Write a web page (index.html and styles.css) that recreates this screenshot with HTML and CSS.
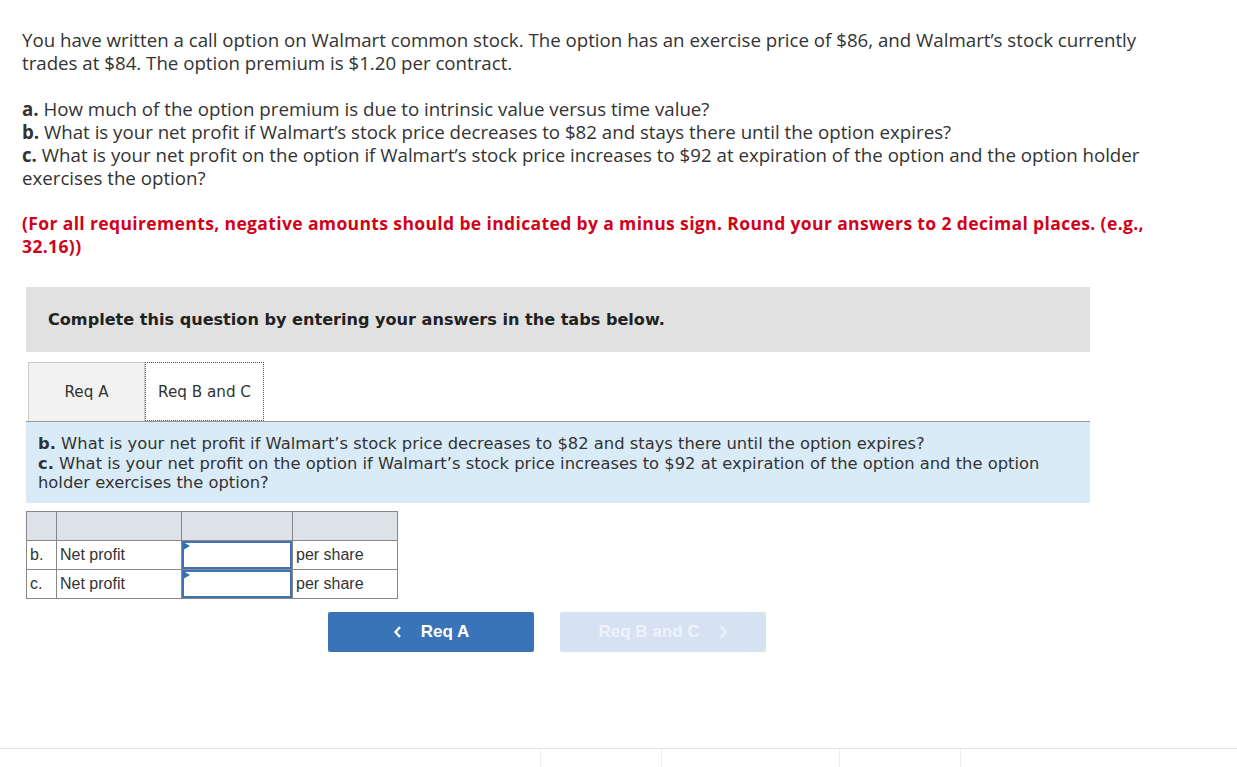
FILE: index.html
```html
<!DOCTYPE html>
<html lang="en">

<head>
    <meta charset="UTF-8">
    <meta name="viewport" content="width=device-width, initial-scale=1.0">
    <title>Question</title>
    <link rel="stylesheet" href="styles.css">
</head>

<body>
    <div class="page">
        <div class="question">
            <p>You have written a call option on Walmart common stock. The option has an exercise price of $86, and Walmart’s stock currently trades at $84. The option premium is $1.20 per contract.</p>
            <p><b>a.</b> How much of the option premium is due to intrinsic value versus time value?<br>
                <b>b.</b> What is your net profit if Walmart’s stock price decreases to $82 and stays there until the option expires?<br>
                <b>c.</b> What is your net profit on the option if Walmart’s stock price increases to $92 at expiration of the option and the option holder exercises the option?</p>
            <p class="note">(For all requirements, negative amounts should be indicated by a minus sign. Round your answers to 2 decimal places. (e.g., 32.16))</p>
        </div>

        <div class="work">
            <div class="banner">Complete this question by entering your answers in the tabs below.</div>

            <div class="tabs">
                <div class="tab">Req A</div>
                <div class="tab active">Req B and C</div>
            </div>

            <div class="panel">
                <b>b.</b> What is your net profit if Walmart’s stock price decreases to $82 and stays there until the option expires?<br>
                <b>c.</b> What is your net profit on the option if Walmart’s stock price increases to $92 at expiration of the option and the option holder exercises the option?
            </div>

            <table class="answers">
                <tr class="head">
                    <td class="c1"></td>
                    <td class="c2"></td>
                    <td class="c3"></td>
                    <td class="c4"></td>
                </tr>
                <tr>
                    <td>b.</td>
                    <td>Net profit</td>
                    <td class="entry"><input type="text"></td>
                    <td>per share</td>
                </tr>
                <tr>
                    <td>c.</td>
                    <td>Net profit</td>
                    <td class="entry"><input type="text"></td>
                    <td>per share</td>
                </tr>
            </table>

            <div class="nav">
                <button class="btn prev">
                    <svg width="10" height="14" viewBox="0 0 10 14"><polyline points="7,2 2.5,7 7,12" fill="none" stroke="currentColor" stroke-width="2.4"/></svg>
                    Req A
                </button>
                <button class="btn next">
                    Req B and C
                    <svg width="10" height="14" viewBox="0 0 10 14"><polyline points="3,2 7.5,7 3,12" fill="none" stroke="currentColor" stroke-width="2.4"/></svg>
                </button>
            </div>
        </div>
    </div>

    <div class="footer">
        <span></span><span></span><span></span><span></span>
    </div>
</body>

</html>
```

FILE: styles.css
```css
body {
    margin: 0;
    background: #fff;
    color: #333;
}

.page {
    padding: 28px 0 0 22px;
    height: 720px;
    box-sizing: border-box;
}

.question {
    font-family: "Open Sans", sans-serif;
    font-size: 18.7px;
    line-height: 23px;
    width: 1125px;
    color: #333;
}

.question p {
    margin: 0 0 23px;
}

.question b {
    font-weight: 700;
}

.note {
    color: #d0021b;
    font-weight: 700;
    font-size: 17.5px;
    letter-spacing: 0.37px;
}

.work {
    margin-left: 4px;
    width: 1064px;
    margin-top: 29px;
}

.banner {
    background: #e1e1e1;
    height: 65px;
    display: flex;
    align-items: center;
    padding-left: 22px;
    font-family: "DejaVu Sans", Verdana, sans-serif;
    font-weight: 700;
    font-size: 16.1px;
    color: #222;
}

.tabs {
    display: flex;
    margin-top: 10px;
    padding-left: 2px;
}

.tab {
    width: 117px;
    height: 59px;
    display: flex;
    align-items: center;
    justify-content: center;
    font-family: "DejaVu Sans", Verdana, sans-serif;
    font-size: 15.2px;
    color: #333;
    background: #f2f2f2;
    border: 1px solid #ccc;
    border-bottom: none;
    box-sizing: border-box;
}

.tab.active {
    background: #fff;
    border: 1px dotted #4a5a6a;
    width: 119px;
}

.panel {
    background: #daebf8;
    border-top: 1px solid #999;
    padding: 12px 12px 10px;
    font-family: "DejaVu Sans", Verdana, sans-serif;
    font-size: 16.35px;
    line-height: 19.5px;
    color: #333;
}

.answers {
    border-collapse: collapse;
    margin-top: 8px;
    font-family: "Liberation Sans", Arial, sans-serif;
    font-size: 16px;
    color: #333;
}

.answers td {
    border: 1px solid #888;
    height: 29px;
    padding: 0 3px;
    box-sizing: border-box;
}

.answers .head td {
    background: #dde1e8;
}

.c1 { width: 30px; }
.c2 { width: 125px; }
.c3 { width: 111px; }
.c4 { width: 105px; }

.answers td.entry {
    padding: 0;
    position: relative;
}

.entry input {
    display: block;
    width: 100%;
    height: 28px;
    box-sizing: border-box;
    border: 2px solid #3f73b4;
    margin: 0;
    outline: none;
}

.entry::before {
    content: "";
    position: absolute;
    left: 1px;
    top: 1px;
    border-left: 7px solid #2f6db5;
    border-top: 4px solid transparent;
    border-bottom: 4px solid transparent;
}

.nav {
    display: flex;
    gap: 26px;
    margin-top: 13px;
    padding-left: 302px;
}

.btn {
    width: 206px;
    height: 40px;
    border: none;
    border-radius: 2px;
    font-family: "Liberation Sans", Arial, sans-serif;
    font-weight: 700;
    font-size: 17px;
    color: #fff;
    display: flex;
    align-items: center;
    justify-content: center;
    gap: 18px;
}

.btn.prev {
    background: #3973b8;
}

.btn.next {
    background: #d6e2f1;
    color: #eef3fa;
}

.footer {
    border-top: 1px solid #e6e6e6;
    margin-top: 28px;
    height: 18px;
    display: flex;
}

.footer span {
    border-left: 1px solid #eeeeee;
    height: 18px;
}

.footer span:nth-child(1) { margin-left: 540px; }
.footer span:nth-child(2) { margin-left: 120px; }
.footer span:nth-child(3) { margin-left: 177px; }
.footer span:nth-child(4) { margin-left: 120px; }
```
